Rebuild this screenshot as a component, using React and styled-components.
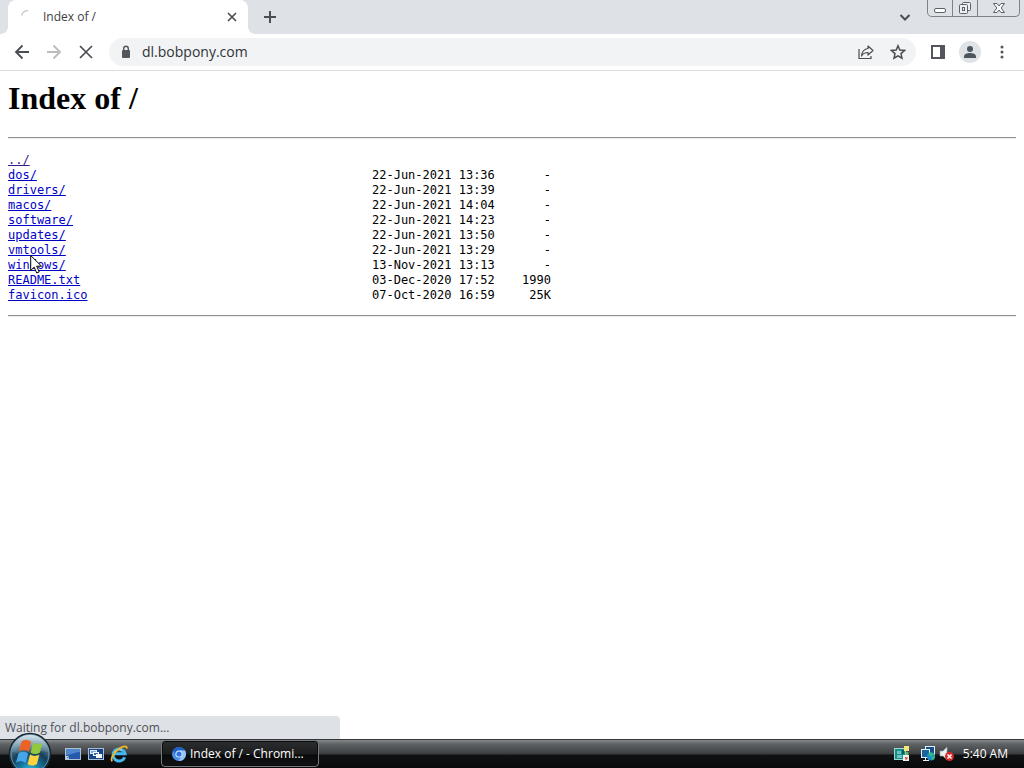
import React from 'react';
import styled, { createGlobalStyle } from 'styled-components';

const GlobalStyle = createGlobalStyle`
  * { box-sizing: border-box; }
  body { margin: 0; background: #fff; }
  button, input { font: inherit; color: inherit; }
`;

const ui = '"Open Sans", "Noto Sans", sans-serif';

const Desktop = styled.div`
  display: flex;
  flex-direction: column;
  height: 100vh;
  overflow: hidden;
  font-family: ${ui};
  font-size: 12px;
  color: #3c4043;
`;

const TabStrip = styled.header`
  display: flex;
  align-items: flex-start;
  height: 34px;
  flex: none;
  padding: 0 4px 0 8px;
  background: #dee1e6;
`;

const Tab = styled.div`
  position: relative;
  display: flex;
  align-items: center;
  width: 240px;
  height: 34px;
  padding: 0 8px 0 12px;
  border-radius: 8px 8px 0 0;
  background: #fff;
  &::before, &::after {
    content: '';
    position: absolute;
    bottom: 0;
    width: 8px;
    height: 8px;
  }
  &::before { left: -8px; background: radial-gradient(circle at 0 0, transparent 8px, #fff 8px); }
  &::after { right: -8px; background: radial-gradient(circle at 100% 0, transparent 8px, #fff 8px); }
`;

const TabTitle = styled.span`
  flex: 1;
  margin-left: 7px;
  line-height: 16px;
`;

const IconButton = styled.button`
  display: flex;
  align-items: center;
  justify-content: center;
  flex: none;
  width: ${(p) => p.$w || 32}px;
  height: ${(p) => p.$h || 28}px;
  padding: 0;
  border: 0;
  background: none;
  color: ${(p) => (p.disabled ? '#babcbe' : '#4a4d51')};
`;

const Spacer = styled.div`
  flex: 1;
`;

const WindowControls = styled.div`
  display: flex;
  height: 17px;
  margin-left: 6px;
  overflow: hidden;
  border: 1px solid #7d8288;
  border-top: 0;
  border-radius: 0 0 5px 5px;
`;

const WindowButton = styled.button`
  display: flex;
  align-items: center;
  justify-content: center;
  width: ${(p) => p.$w}px;
  padding: 0;
  border: 0;
  background: none;
  & + & { border-left: 1px solid #7d8288; }
`;

const Toolbar = styled.nav`
  display: flex;
  align-items: center;
  flex: none;
  height: 37px;
  padding: 0 6px;
  border-bottom: 1px solid #dadce0;
  background: #fff;
`;

const Omnibox = styled.label`
  display: flex;
  align-items: center;
  flex: 1;
  min-width: 0;
  height: 28px;
  margin: 0 6px 0 7px;
  padding: 0 2px 0 10px;
  border-radius: 14px;
  background: #f1f3f4;
`;

const Address = styled.input`
  flex: 1;
  min-width: 0;
  margin-left: 9px;
  padding: 0;
  border: 0;
  outline: 0;
  background: none;
  color: #303337;
  font-size: 14px;
  line-height: 20px;
`;

const Avatar = styled.span`
  display: flex;
  align-items: center;
  justify-content: center;
  width: 22px;
  height: 22px;
  border-radius: 50%;
  background: #dfe3e6;
`;

const Viewport = styled.main`
  position: relative;
  flex: 1;
  min-height: 0;
  padding: 9px 8px;
  background: #fff;
  color: #000;
`;

const Heading = styled.h1`
  margin: 0 0 21px;
  font: bold 32px/36px "Liberation Serif", serif;
`;

const Rule = styled.hr`
  height: 2px;
  margin: 0;
  border: 0;
  border-top: 1px solid #919191;
  border-bottom: 1px solid #ececec;
`;

const Listing = styled.table`
  margin: 14px 0 12px;
  border-collapse: collapse;
  font: 12px/15px "DejaVu Sans Mono", monospace;
  td { height: 15px; padding: 0; white-space: nowrap; }
`;

const NameCell = styled.td`
  width: 364px;
`;

const DateCell = styled.td`
  width: 129px;
`;

const SizeCell = styled.td`
  width: 50px;
  text-align: right;
`;

const FileLink = styled.a`
  color: ${(p) => (p.$visited ? '#3d1a8b' : '#0000c8')};
  text-decoration: underline;
`;

const StatusBubble = styled.div`
  position: absolute;
  left: 0;
  bottom: 0;
  width: 340px;
  height: 23px;
  padding: 0 5px;
  border-radius: 0 4px 0 0;
  background: #dee1e6;
  color: #4d5156;
  line-height: 23px;
`;

const Pointer = styled.svg`
  position: absolute;
  left: 30px;
  top: 183px;
`;

const Taskbar = styled.footer`
  position: relative;
  display: flex;
  align-items: center;
  flex: none;
  height: 29px;
  padding: 0 16px 1px 61px;
  border-top: 1px solid #33373a;
  background: linear-gradient(#85898b 0, #606365 4px, #3b3d3f 14px, #101214 15px, #07090a 100%);
  color: #fff;
  line-height: 16px;
`;

const StartButton = styled.button`
  position: absolute;
  left: 8px;
  top: -8px;
  width: 44px;
  height: 44px;
  padding: 0;
  border: 0;
  background: none;
`;

const TaskButton = styled.button`
  display: flex;
  align-items: center;
  width: 158px;
  height: 27px;
  margin-left: 31px;
  padding: 0 9px;
  border: 1px solid #777b7d;
  border-radius: 4px;
  background: linear-gradient(#2b2d2e, #1b1d1e 13px, #08090a 14px, #111314);
  box-shadow: inset 0 0 0 1px #0b0c0d;
  color: #fff;
  gap: 3px;
  white-space: nowrap;
`;

const Clock = styled.time`
  margin-left: 7px;
`;

const files = [
  ['../', '', ''],
  ['dos/', '22-Jun-2021 13:36', '-'],
  ['drivers/', '22-Jun-2021 13:39', '-'],
  ['macos/', '22-Jun-2021 14:04', '-'],
  ['software/', '22-Jun-2021 14:23', '-'],
  ['updates/', '22-Jun-2021 13:50', '-'],
  ['vmtools/', '22-Jun-2021 13:29', '-'],
  ['windows/', '13-Nov-2021 13:13', '-'],
  ['README.txt', '03-Dec-2020 17:52', '1990'],
  ['favicon.ico', '07-Oct-2020 16:59', '25K'],
];

const Stroke = ({ size = 16, w = 2, children }) => (
  <svg width={size} height={size} viewBox={`0 0 ${size} ${size}`} fill="none" stroke="currentColor" strokeWidth={w} aria-hidden="true">
    {children}
  </svg>
);

const WindowsOrb = () => (
  <svg width="44" height="44" viewBox="0 0 44 44" aria-hidden="true">
    <defs>
      <radialGradient id="orb" cx="50%" cy="95%" r="85%">
        <stop offset="0" stopColor="#36d2ee" />
        <stop offset=".3" stopColor="#157ba4" />
        <stop offset=".6" stopColor="#173e58" />
        <stop offset="1" stopColor="#7b9cae" />
      </radialGradient>
      <linearGradient id="orbShine" x1="0" y1="0" x2="0" y2="1">
        <stop offset="0" stopColor="#e6f0f5" stopOpacity=".85" />
        <stop offset="1" stopColor="#93b5c6" stopOpacity=".2" />
      </linearGradient>
    </defs>
    <circle cx="22" cy="22" r="20.5" fill="url(#orb)" stroke="#18242d" strokeWidth="1.5" />
    <circle cx="22" cy="22" r="19" fill="none" stroke="#8bbcd0" strokeOpacity=".6" />
    <path d="M4 20C5 9 13 3 22 3s17 6 18 17c-11-3-24 4-36 0z" fill="url(#orbShine)" />
    <g transform="translate(-5 -5.500) scale(1.200)">
      <path d="M15.500 12.500c3-2 5.500-1.500 8 .2l-2 8.300c-2.500-1.700-5-2-8.200-.3z" fill="#ee6226" />
      <path d="M25 13.500c2.700 1.500 5 1.700 8-.1l-2.200 8.300c-2.800 1.800-5.300 1.600-7.800.1z" fill="#91c83e" />
      <path d="M12.900 22.200c3-1.700 5.500-1.400 8 .2l-2 8c-2.500-1.600-5-2-8-.1z" fill="#45a5e8" />
      <path d="M22.500 23.300c2.700 1.600 5 1.600 7.900 0l-2.100 8c-3 1.800-5.400 1.600-7.800.1z" fill="#ffd23d" />
    </g>
  </svg>
);

const DesktopIcon = () => (
  <svg width="18" height="16" viewBox="0 0 18 16" aria-hidden="true">
    <rect x="1.500" y="2.500" width="15" height="11" fill="#2459ab" stroke="#adc1d4" />
    <path d="M2 3h14v3C11 6 8 9 2 9z" fill="#4f86cc" />
    <path d="M2 10h3v3H2z" fill="#c3d3e0" />
    <path d="M3 12l2-1.500" stroke="#4c6579" />
  </svg>
);

const SwitcherIcon = () => (
  <svg width="18" height="16" viewBox="0 0 18 16" aria-hidden="true">
    <rect x="1.500" y="2.500" width="15" height="11" fill="#164487" stroke="#a9bfd6" />
    <rect x="3" y="4" width="7" height="4" fill="#e4eef8" />
    <rect x="4" y="5" width="5" height="2" fill="#7da8db" />
    <rect x="6" y="6" width="6" height="4" fill="#f5f9fd" />
    <rect x="7" y="7" width="4" height="2" fill="#386eab" />
    <rect x="9" y="8" width="6" height="4" fill="#f5f9fd" />
  </svg>
);

const ExplorerIcon = () => (
  <svg width="18" height="18" viewBox="0 0 18 18" aria-hidden="true">
    <path d="M14.700 12.300A6 6 0 1 1 15 8.800H4.500" fill="none" stroke="#45b7ef" strokeWidth="3" />
    <path d="M4 7.500a5.500 5.500 0 0 1 8-2" fill="none" stroke="#a4e3ff" strokeWidth="1" />
    <path d="M2.300 16.200C-.2 14 4 7.400 9 3.700 13 .8 17 .2 16.800 3.600" fill="none" stroke="#f4b91c" strokeWidth="1.800" />
  </svg>
);

const ChromiumIcon = () => (
  <svg width="16" height="16" viewBox="0 0 16 16" aria-hidden="true">
    <circle cx="8" cy="8" r="7" fill="#4b8ee8" />
    <path d="M2 4.500A7 7 0 0 1 14.100 4.600H8A3.400 3.400 0 0 0 4.900 9.500z" fill="#1f5fc4" />
    <path d="M14.100 4.600A7 7 0 0 1 7.500 15l3.400-5.300A3.400 3.400 0 0 0 8 4.600z" fill="#94c2fa" />
    <circle cx="8" cy="8" r="3.600" fill="#d9eaff" />
    <circle cx="8" cy="8" r="2.600" fill="#2c73d9" />
  </svg>
);

const VmIcon = () => (
  <svg width="18" height="18" viewBox="0 0 18 18" aria-hidden="true">
    <rect x="1.500" y="3.500" width="11" height="11" fill="#168e8b" stroke="#a3d5ce" />
    <path d="M4 6h4v3H4zM4 10h5v3H4z" fill="#6fc4bb" />
    <path d="M9 5h2v4H9z" fill="#0b5863" />
    <rect x="11" y="1" width="5" height="5" fill="#f3e77a" />
    <path d="M12.500 7h3v4h-3z" fill="#5db36b" />
    <rect x="10" y="10" width="6" height="6" fill="#f2f1ee" />
    <path d="M12 12l2 2m0-2v2h-2" fill="none" stroke="#cc3b2d" />
  </svg>
);

const NetworkIcon = () => (
  <svg width="17" height="18" viewBox="0 0 17 18" aria-hidden="true">
    <rect x="5.500" y="1.500" width="9" height="9" fill="#144f87" stroke="#e2f2fa" />
    <rect x="1.500" y="4.500" width="8" height="8" fill="#1a659e" stroke="#e2f2fa" />
    <path d="M3 15.500h6M5.500 13v2" stroke="#e2f2fa" />
    <circle cx="11" cy="11.500" r="4" fill="#188fcc" />
    <path d="M8 9.500c2-3 5-2 6 0l-2 1-1 2-1-2zM12 12l3-1c0 2-1 4-3 4z" fill="#39b979" />
  </svg>
);

const MutedIcon = () => (
  <svg width="17" height="18" viewBox="0 0 17 18" aria-hidden="true">
    <path d="M2 6h3l4-4v13l-4-4H2z" fill="#edf0f2" stroke="#96a0a6" strokeWidth=".7" />
    <circle cx="11.500" cy="11.500" r="4.500" fill="#d92929" />
    <path d="M9.500 9.500l4 4m0-4l-4 4" stroke="#fff" strokeWidth="1.500" />
  </svg>
);

export default function App() {
  return (
    <Desktop>
      <GlobalStyle />
      <TabStrip>
        <Tab>
          <svg width="16" height="16" viewBox="0 0 16 16" fill="none" aria-hidden="true">
            <path d="M1.500 6.500A7 7 0 0 1 8 1.500" stroke="#c8cccf" strokeWidth="1.500" />
          </svg>
          <TabTitle>Index of /</TabTitle>
          <IconButton $w={16} $h={16} aria-label="Close tab">
            <Stroke w={1.700}><path d="M4 4l8 8m0-8l-8 8" /></Stroke>
          </IconButton>
        </Tab>
        <IconButton $w={44} $h={34} aria-label="New tab">
          <Stroke><path d="M8 2v12M2 8h12" /></Stroke>
        </IconButton>
        <Spacer />
        <IconButton $h={34} aria-label="Search tabs">
          <Stroke><path d="M3.500 6l4.500 4.500L12.500 6" /></Stroke>
        </IconButton>
        <WindowControls>
          <WindowButton $w={24} aria-label="Minimize">
            <svg width="14" height="14" fill="#fff" stroke="#5d6268"><rect x="1.500" y="7.500" width="11" height="4" rx="1.500" /></svg>
          </WindowButton>
          <WindowButton $w={25} aria-label="Restore">
            <svg width="14" height="14" fill="#eef0f3" stroke="#5d6268">
              <rect x="4.500" y="1.500" width="8" height="8" rx="1" />
              <rect x="1.500" y="3.500" width="8" height="9" rx="1" />
              <rect x="4.500" y="6.500" width="2" height="3" />
            </svg>
          </WindowButton>
          <WindowButton $w={42} aria-label="Close window">
            <svg width="14" height="14" fill="#f8f9fa" stroke="#5d6268">
              <path d="M1.500 2.500h3.500l2 2.500 2-2.500h3.500L9.200 7l3.300 4.500H9L7 9l-2 2.500H1.500L4.800 7z" />
            </svg>
          </WindowButton>
        </WindowControls>
      </TabStrip>

      <Toolbar aria-label="Browser toolbar">
        <IconButton aria-label="Back"><Stroke w={1.800}><path d="M15 8H2m6.500-6.500L2 8l6.500 6.500" /></Stroke></IconButton>
        <IconButton disabled aria-label="Forward"><Stroke w={1.800}><path d="M1 8h13M7.500 1.500L14 8l-6.500 6.500" /></Stroke></IconButton>
        <IconButton aria-label="Stop loading"><Stroke w={1.700}><path d="M2 2l12 12m0-12L2 14" /></Stroke></IconButton>
        <Omnibox>
          <svg width="14" height="16" viewBox="0 0 14 16" aria-hidden="true">
            <rect x="3" y="6" width="8" height="8" rx="1" fill="#53565a" />
            <path d="M4.700 6.500v-2a2.300 2.300 0 0 1 4.600 0v2" fill="none" stroke="#53565a" strokeWidth="1.400" />
          </svg>
          <Address aria-label="Address" defaultValue="dl.bobpony.com" />
          <IconButton aria-label="Share">
            <Stroke w={1.200}>
              <path d="M1 5v9.500h12V12" />
              <path d="M10 2l5 4.500-5 4.500V8.500C7 8.500 5 9.500 3.500 12 4 7.500 6 5 10 4.500z" strokeLinejoin="round" />
            </Stroke>
          </IconButton>
          <IconButton aria-label="Bookmark">
            <Stroke w={1.500}><path d="M8 1.800l1.800 4.300 4.700.4-3.500 3.100 1 4.600L8 11.800l-4 2.400 1-4.600-3.500-3.100 4.700-.4z" /></Stroke>
          </IconButton>
        </Omnibox>
        <IconButton aria-label="Side panel">
          <svg width="16" height="16" fill="#53565a" aria-hidden="true"><path fillRule="evenodd" d="M1 1h14v14H1zM3 3v10h7V3z" /></svg>
        </IconButton>
        <IconButton aria-label="Profile">
          <Avatar>
            <svg width="14" height="14" fill="#4b565e" aria-hidden="true"><circle cx="7" cy="4" r="3" /><path d="M1 13v-1.500C1 9 4 8 7 8s6 1 6 3.500V13z" /></svg>
          </Avatar>
        </IconButton>
        <IconButton aria-label="Menu">
          <svg width="16" height="16" fill="#53565a" aria-hidden="true"><circle cx="8" cy="3" r="1.500" /><circle cx="8" cy="8" r="1.500" /><circle cx="8" cy="13" r="1.500" /></svg>
        </IconButton>
      </Toolbar>

      <Viewport>
        <Heading>Index of /</Heading>
        <Rule />
        <Listing>
          <tbody>
            {files.map(([name, date, size]) => (
              <tr key={name}>
                <NameCell><FileLink href="#" $visited={name === '../'}>{name}</FileLink></NameCell>
                <DateCell>{date}</DateCell>
                <SizeCell>{size}</SizeCell>
              </tr>
            ))}
          </tbody>
        </Listing>
        <Rule />
        <Pointer width="13" height="21" viewBox="0 0 13 21" aria-hidden="true">
          <path d="M.7 1.500v15l3.500-3.300 2.500 5.800 2.500-1.100-2.500-5.700h4.800z" fill="#fff" stroke="#000" />
        </Pointer>
        <StatusBubble role="status">Waiting for dl.bobpony.com...</StatusBubble>
      </Viewport>

      <Taskbar>
        <StartButton aria-label="Start"><WindowsOrb /></StartButton>
        <IconButton $w={23} aria-label="Show desktop"><DesktopIcon /></IconButton>
        <IconButton $w={23} aria-label="Switch between windows"><SwitcherIcon /></IconButton>
        <IconButton $w={23} aria-label="Internet Explorer"><ExplorerIcon /></IconButton>
        <TaskButton><ChromiumIcon />Index of / - Chromi...</TaskButton>
        <Spacer />
        <IconButton $w={36} aria-label="Virtual machine tools"><VmIcon /></IconButton>
        <IconButton $w={18} aria-label="Network"><NetworkIcon /></IconButton>
        <IconButton $w={18} aria-label="Volume muted"><MutedIcon /></IconButton>
        <Clock>5:40 AM</Clock>
      </Taskbar>
    </Desktop>
  );
}
